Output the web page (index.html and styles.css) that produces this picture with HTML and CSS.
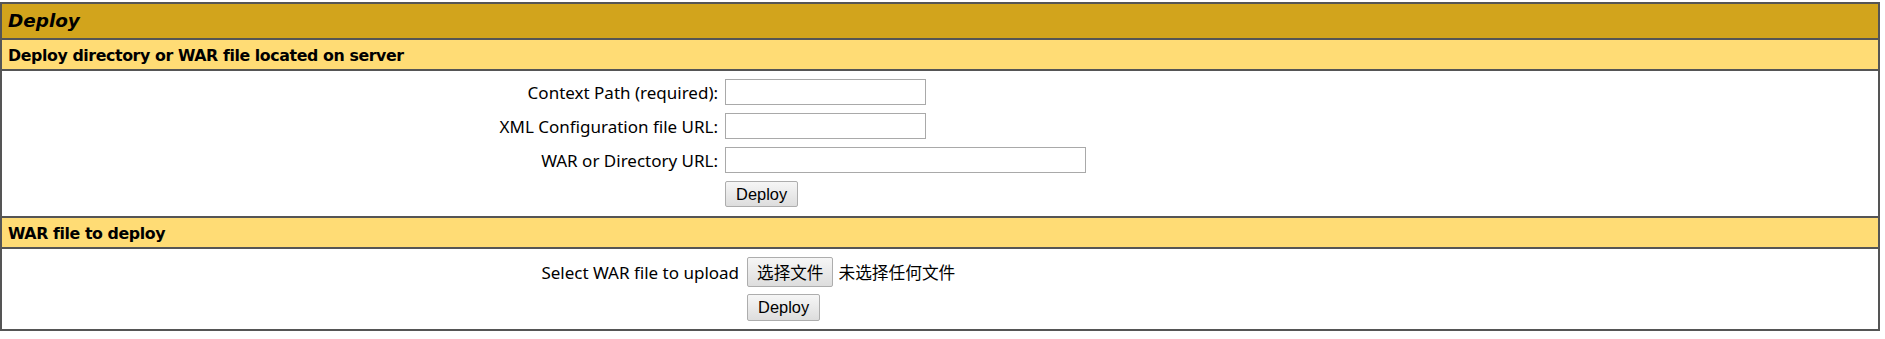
FILE: index.html
```html
<!DOCTYPE html>
<html lang="en">
<head>
  <meta charset="UTF-8">
  <title>Deploy</title>
  <link rel="stylesheet" href="styles.css">
</head>
<body>
  <div class="panel">
    <div class="panel-title">Deploy</div>

    <div class="panel-header">Deploy directory or WAR file located on server</div>
    <form class="panel-body">
      <div class="form-grid server-grid">
        <label class="row-label" for="deployPath">Context Path (required):</label>
        <div class="row-field"><input class="text-input" type="text" id="deployPath"></div>

        <label class="row-label" for="deployConfig">XML Configuration file URL:</label>
        <div class="row-field"><input class="text-input" type="text" id="deployConfig"></div>

        <label class="row-label" for="deployWar">WAR or Directory URL:</label>
        <div class="row-field"><input class="text-input text-input-wide" type="text" id="deployWar"></div>

        <div></div>
        <div class="row-field"><button class="btn" type="button">Deploy</button></div>
      </div>
    </form>

    <div class="panel-header">WAR file to deploy</div>
    <form class="panel-body panel-body-upload">
      <div class="form-grid upload-grid">
        <div class="row-label">Select WAR file to upload</div>
        <div class="row-field">
          <button class="btn btn-file" type="button">选择文件</button>
          <span class="file-status">未选择任何文件</span>
        </div>

        <div></div>
        <div class="row-field"><button class="btn btn-deploy" type="button">Deploy</button></div>
      </div>
    </form>
  </div>
</body>
</html>
```

FILE: styles.css
```css
:root {
  --title-bg: #d2a41c;
  --header-bg: #ffdc75;
  --line: #555555;
  --text: #000000;
  --input-border: #a9a9a9;
}

* {
  margin: 0;
  padding: 0;
  box-sizing: border-box;
}

body {
  padding-top: 2px;
  background: #ffffff;
  color: var(--text);
  font-family: "Noto Sans", "Noto Sans CJK SC", sans-serif;
}

.panel {
  width: 1880px;
  border: 2px solid var(--line);
}

.panel-title {
  height: 36px;
  padding: 3px 6px 0;
  background: var(--title-bg);
  border-bottom: 2px solid var(--line);
  font-family: "DejaVu Sans", sans-serif;
  font-size: 18.4px;
  font-weight: bold;
  font-style: italic;
  line-height: 28px;
}

.panel-header {
  height: 31px;
  padding: 1px 6px 0;
  background: var(--header-bg);
  border-bottom: 2px solid var(--line);
  font-family: "DejaVu Sans", sans-serif;
  font-size: 15.8px;
  font-weight: bold;
  letter-spacing: -0.4px;
  line-height: 29px;
}

.panel-body {
  height: 147px;
  padding-top: 8px;
  border-bottom: 2px solid var(--line);
}

.panel-body-upload {
  height: 80px;
  border-bottom: none;
}

.form-grid {
  display: grid;
  row-gap: 8px;
  align-items: center;
}

.server-grid {
  grid-template-columns: 38.17% 1fr;
  column-gap: 7px;
  grid-auto-rows: 26px;
}

.upload-grid {
  grid-template-columns: 39.29% 1fr;
  column-gap: 8px;
  grid-template-rows: 30px 27px;
  row-gap: 7px;
}

.row-label {
  padding-top: 2px;
  text-align: right;
  font-size: 17px;
  line-height: 22px;
}

.row-field {
  display: flex;
  align-items: center;
  height: 100%;
}

.text-input {
  width: 201px;
  height: 26px;
  border: 1px solid var(--input-border);
  background: #ffffff;
  outline: none;
}

.text-input-wide {
  width: 361px;
}

.btn {
  height: 26px;
  padding: 0 10px;
  border: 1px solid #adadad;
  border-radius: 2px;
  background: linear-gradient(#f6f6f6, #dddddd);
  color: var(--text);
  font-family: "Liberation Sans", Arial, sans-serif;
  font-size: 16.4px;
  cursor: pointer;
}

.btn-deploy {
  height: 27px;
}

.btn-file {
  height: 30px;
  padding: 0 9px;
  font-family: "Noto Sans CJK SC", sans-serif;
  font-size: 16.6px;
}

.file-status {
  margin-left: 5px;
  font-family: "Noto Sans CJK SC", sans-serif;
  font-size: 16.7px;
}
```
